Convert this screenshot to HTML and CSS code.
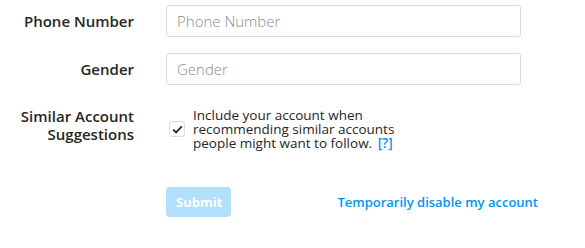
FILE: index.html
```html
<!DOCTYPE html>
<html lang="en">
    <head>
        <meta charset="UTF-8">
        <title>Edit Profile</title>
        <meta name="viewport" content="width=device-width,initial-scale=1.0">
        <link rel="stylesheet" href="styles.css">
    </head>
    <body>
        <form class="profileForm">
            <div class="formRow">
                <div class="formHead"><label for="phoneInput">Phone Number</label></div>
                <div class="formBody">
                    <input type="text" placeholder="Phone Number" id="phoneInput">
                </div>
            </div>
            <div class="formRow">
                <div class="formHead"><label for="genderInput">Gender</label></div>
                <div class="formBody">
                    <input type="text" placeholder="Gender" id="genderInput">
                </div>
            </div>
            <div class="formRow formRowTop">
                <div class="formHead formHeadTall"><label>Similar Account Suggestions</label></div>
                <div class="formBody">
                    <div class="checkRow">
                        <span class="checkBox">
                            <svg width="11" height="9" viewBox="0 0 11 9"><path d="M1.2 4.6 L4.1 7.4 L9.8 1.4" fill="none" stroke="#262626" stroke-width="1.8"/></svg>
                        </span>
                        <div class="checkText">Include your account when recommending similar accounts people might want to follow. <a href="#" class="helpLink">[?]</a></div>
                    </div>
                </div>
            </div>
            <div class="formRow submitRow">
                <div class="formHead"></div>
                <div class="formBody submitBody">
                    <button type="button" class="submitBtn" disabled>Submit</button>
                    <a href="#" class="disableLink">Temporarily disable my account</a>
                </div>
            </div>
        </form>
    </body>
</html>
```

FILE: styles.css
```css
body{
    margin: 0;
    background: #fff;
    color: #262626;
    font-family: "Open Sans", "Noto Sans", sans-serif;
}
.profileForm{
    padding-top: 5px;
    width: 538px;
}
.formRow{
    display: flex;
    align-items: center;
    margin-bottom: 16px;
}
.formRowTop{
    align-items: flex-start;
}
.formHead{
    box-sizing: border-box;
    width: 166px;
    padding: 0 32px 0 16px;
    text-align: right;
    font-size: 15px;
    font-weight: 600;
    line-height: 18px;
}
.formHeadTall{
    padding-top: 6px;
}
.formBody{
    flex: 1;
}
.formBody>input{
    box-sizing: border-box;
    width: 355px;
    height: 32px;
    border: 1px solid #dbdbdb;
    border-radius: 3px;
    padding: 0 10px;
    font-family: inherit;
    font-size: 15px;
    font-weight: 300;
    color: #262626;
    outline: none;
}
.formBody>input::placeholder{
    color: #8e8e8e;
}
.checkRow{
    display: flex;
    align-items: center;
    padding-top: 7px;
}
.checkBox{
    box-sizing: border-box;
    display: flex;
    align-items: center;
    justify-content: center;
    width: 16px;
    height: 16px;
    margin: 0 8px 0 3px;
    border: 1px solid #dbdbdb;
    border-radius: 3px;
}
.checkText{
    width: 222px;
    font-size: 13.5px;
    line-height: 14px;
}
.helpLink{
    display: inline-block;
    margin-left: 2px;
    line-height: 14px;
    color: #0095f6;
    font-weight: 600;
    text-decoration: none;
}
.submitRow{
    margin-top: 37px;
}
.submitBody{
    display: flex;
    align-items: center;
    justify-content: space-between;
}
.submitBtn{
    background: #b2dffc;
    border: 0;
    border-radius: 4px;
    color: #fff;
    font-family: inherit;
    font-size: 13px;
    font-weight: 700;
    line-height: 18px;
    padding: 6px 10px;
    width: 65px;
}
.disableLink{
    color: #0095f6;
    font-size: 13px;
    font-weight: 600;
    text-decoration: none;
}
```
